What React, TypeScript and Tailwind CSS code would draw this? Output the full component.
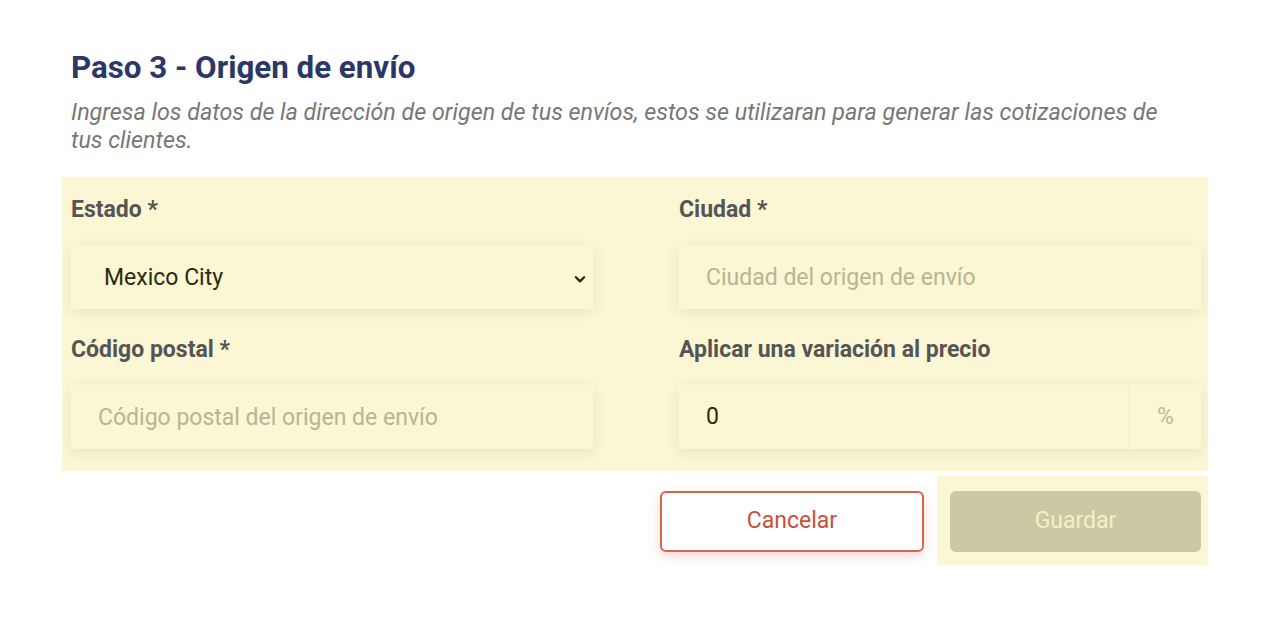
import React from 'react';

const font = { fontFamily: 'Roboto, "Liberation Sans", sans-serif' };

const Label: React.FC<{ text: string }> = ({ text }) => (
  <label className="block h-[30px] mb-[20px] text-[23px] leading-[30px] font-bold text-[#555]">{text}</label>
);

const inputBox =
  'w-full h-[64px] bg-[#fbf6d3] shadow-[0_3px_10px_rgba(120,110,40,0.12)] text-[23px] outline-none';

const OriginStep: React.FC = () => {
  return (
    <div className="min-h-[620px] bg-white px-[71px] pt-[50px]" style={font}>
      <h2 className="text-[31.3px] leading-[36px] font-bold text-[#2b3766]">Paso 3 - Origen de envío</h2>
      <p className="mt-[12px] pr-[30px] text-[23.3px] leading-[28px] italic text-[#777]">
        Ingresa los datos de la dirección de origen de tus envíos, estos se utilizaran para generar las cotizaciones de
        tus clientes.
      </p>

      <div className="mt-[23px] -ml-[9px] -mr-[7px] pl-[9px] pr-[7px] pt-[18px] pb-[22px] bg-[#fbf6d3]">
        <div className="grid grid-cols-2 gap-x-[86px] gap-y-[26px]">
          <div>
            <Label text="Estado *" />
            <div className={`${inputBox} flex items-center justify-between pl-[33px] pr-[6px] pt-[3px] text-[#2d2a12]`}>
              <span>Mexico City</span>
              <svg width="14" height="14" viewBox="0 0 24 24" fill="none" stroke="#2d2a12" strokeWidth="4" strokeLinecap="round" strokeLinejoin="round">
                <polyline points="5 9 12 16 19 9" />
              </svg>
            </div>
          </div>
          <div>
            <Label text="Ciudad *" />
            <input className={`${inputBox} px-[27px] placeholder:text-[#b8b594]`} placeholder="Ciudad del origen de envío" />
          </div>
          <div>
            <Label text="Código postal *" />
            <input className={`${inputBox} px-[27px] placeholder:text-[#b8b594]`} placeholder="Código postal del origen de envío" />
          </div>
          <div>
            <Label text="Aplicar una variación al precio" />
            <div className={`${inputBox} flex`}>
              <input className="flex-1 min-w-0 bg-transparent px-[27px] text-[#2d2a12] outline-none" defaultValue="0" />
              <span className="w-[72px] flex items-center justify-center border-l border-[#efe9c4] text-[#bdb99a]">%</span>
            </div>
          </div>
        </div>
      </div>

      <div className="flex justify-end items-start">
        <button className="mt-[20px] w-[264px] h-[61px] rounded-[6px] border-2 border-[#d66450] bg-white text-[23px] text-[#c9503c] shadow-[0_4px_12px_rgba(214,100,80,0.25)]">
          Cancelar
        </button>
        <div className="mt-[5px] ml-[13px] -mr-[7px] pl-[13px] pr-[7px] pt-[15px] pb-[13px] bg-[#fbf6d3]">
          <button className="w-[251px] h-[61px] rounded-[6px] bg-[#cbc8a3] text-[23px] text-[#f6f0c6]">Guardar</button>
        </div>
      </div>
    </div>
  );
};

export default function App() {
  return <OriginStep />;
}
